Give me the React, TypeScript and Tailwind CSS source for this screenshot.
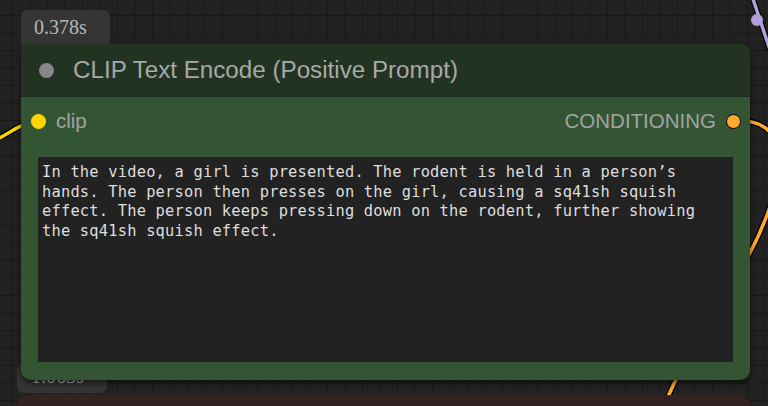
import React from 'react';

const PROMPT =
  'In the video, a girl is presented. The rodent is held in a person’s\n' +
  'hands. The person then presses on the girl, causing a sq41sh squish\n' +
  'effect. The person keeps pressing down on the rodent, further showing\n' +
  'the sq41sh squish effect.';

const Wires: React.FC = () => (
  <svg className="absolute inset-0 pointer-events-none" width={768} height={406} viewBox="0 0 768 406">
    {/* clip input (yellow) */}
    <path d="M-4 140 C 10 133, 20 124, 34 121" stroke="#000" strokeWidth={6} fill="none" />
    <path d="M-4 140 C 10 133, 20 124, 34 121" stroke="#FFD500" strokeWidth={3.5} fill="none" />
    {/* conditioning output (orange) */}
    <path d="M741 121 C 800 121, 780 200, 745 262 S 685 355, 662 410" stroke="#000" strokeWidth={6} fill="none" />
    <path d="M741 121 C 800 121, 780 200, 745 262 S 685 355, 662 410" stroke="#FFA931" strokeWidth={3.5} fill="none" />
    {/* purple link top right */}
    <path d="M752 -4 L 770 50" stroke="#000" strokeWidth={6} fill="none" />
    <path d="M752 -4 L 770 50" stroke="#B39DDB" strokeWidth={3.5} fill="none" />
    <circle cx={757} cy={20} r={6} fill="#B39DDB" />
  </svg>
);

export default function App() {
  return (
    <div
      className="relative w-[768px] h-[406px] overflow-hidden bg-[#222222] bg-[linear-gradient(to_right,#1a1a1a_1px,transparent_1px),linear-gradient(to_bottom,#1a1a1a_1px,transparent_1px)] [background-size:17.5px_17.5px] [background-position:12px_15px]"
      style={{ fontFamily: '"Liberation Sans", Arial, sans-serif' }}
    >
      <Wires />

      <div className="relative flex flex-col pt-[10px]">
        {/* timing badge */}
        <div className="ml-[21px] w-[89px] h-[40px] -mb-[6px] rounded-[7px] bg-[#353535] pl-[13px] pt-[5px] text-[20px] leading-[24px] text-[#b8b8b8] font-['Liberation_Serif',serif]">
          0.378s
        </div>

        {/* CLIP Text Encode node */}
        <div className="relative z-10 ml-[21px] w-[729px] h-[336px] rounded-[10px] bg-[#335533] shadow-[0_3px_6px_rgba(0,0,0,0.6)] flex flex-col overflow-hidden">
          <div className="h-[53px] bg-[#223322] flex items-center pl-[18px] gap-[19px] border-b border-[#1e2e1e]">
            <span className="w-[15px] h-[15px] rounded-full bg-[#888888]" />
            <span className="text-[24.2px] text-[#a8a8a8]">CLIP Text Encode (Positive Prompt)</span>
          </div>

          <div className="h-[48px] flex items-center justify-between pl-[10px] pr-[9px]">
            <div className="flex items-center gap-[10px]">
              <span className="w-[15px] h-[15px] rounded-full bg-[#FFD500]" />
              <span className="text-[20.5px] text-[#a3a3a3]">clip</span>
            </div>
            <div className="flex items-center gap-[10px]">
              <span className="text-[20.5px] text-[#a3a3a3]">CONDITIONING</span>
              <span className="w-[15px] h-[15px] rounded-full bg-[#FFA931] border-[1.5px] border-black" />
            </div>
          </div>

          <div className="mx-[17px] mt-[12px] h-[205px] bg-[#222222] px-[4px] pt-[6px] whitespace-pre-wrap text-[15.4px] tracking-[0.2px] leading-[19.6px] text-[#dedede] font-['DejaVu_Sans_Mono',monospace]">
            {PROMPT}
          </div>
        </div>

        {/* next node, mostly below the fold */}
        <div className="-mt-[17px] ml-[17px] w-[90px] h-[30px] rounded-[7px] bg-[#353535] pl-[14px] pt-[1px] text-[20px] leading-[24px] text-[#b8b8b8] font-['Liberation_Serif',serif]">
          1.063s
        </div>
        <div className="mt-[2px] ml-[17px] w-[733px] h-[40px] rounded-[10px] bg-[#322222]" />
      </div>
    </div>
  );
}
